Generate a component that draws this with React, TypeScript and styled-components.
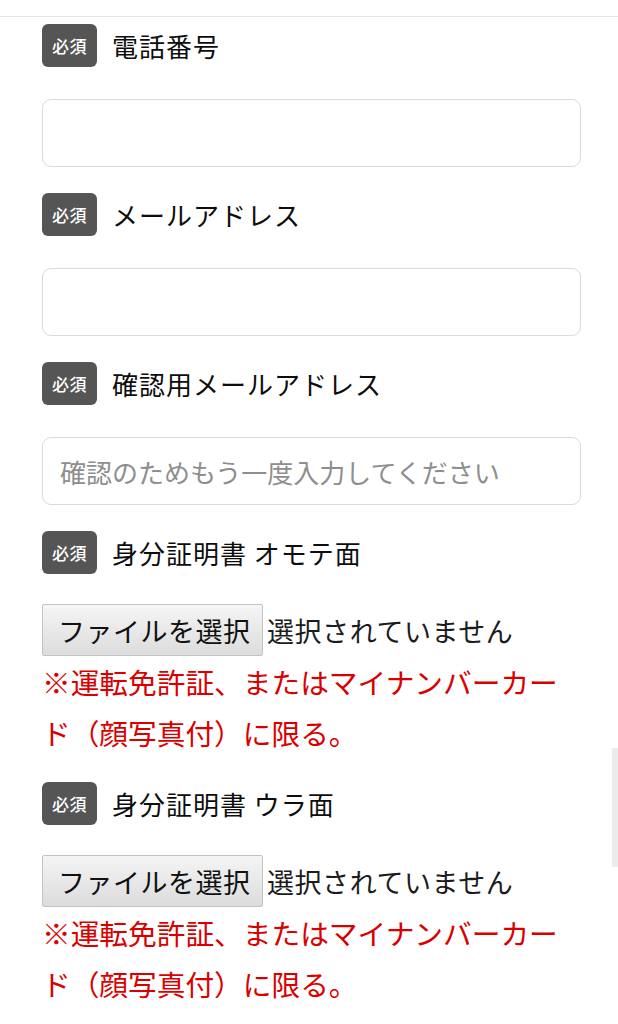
import React from "react";
import styled, { createGlobalStyle } from "styled-components";

const GlobalStyle = createGlobalStyle`
  html, body {
    margin: 0;
    padding: 0;
    background: #ffffff;
  }
  body {
    font-family: "Noto Sans CJK JP", "Noto Sans", sans-serif;
    color: #1a1a1a;
  }
  * { box-sizing: border-box; }
`;

const Page = styled.div`
  width: 618px;
  min-height: 1024px;
  overflow: hidden;
`;

const TopBar = styled.div`
  height: 17px;
  border-bottom: 1px solid #e6e6e6;
`;

const Form = styled.form`
  display: flex;
  flex-direction: column;
  padding: 7px 37px 0 42px;
`;

const Field = styled.div<{ $kind: "text" | "file" }>`
  display: flex;
  flex-direction: column;
  margin-bottom: ${(p) => (p.$kind === "text" ? "26px" : "21px")};
`;

const LabelRow = styled.div<{ $gap: number }>`
  display: flex;
  align-items: center;
  height: 43px;
  margin-bottom: ${(p) => p.$gap}px;
`;

const Badge = styled.span`
  display: inline-flex;
  align-items: center;
  justify-content: center;
  width: 55px;
  height: 43px;
  border-radius: 6px;
  background: #555555;
  color: #ffffff;
  font-size: 17px;
  font-weight: 500;
  letter-spacing: 0.5px;
  line-height: 1;
  flex-shrink: 0;
`;

const LabelText = styled.span`
  margin-left: 15px;
  font-size: 26px;
  letter-spacing: 1px;
  color: #0d0d0d;
  line-height: 1;
  white-space: pre;
`;

const TextInput = styled.input`
  width: 100%;
  height: 68px;
  border: 1.5px solid #dadada;
  border-radius: 9px;
  padding: 0 17px;
  font-family: "Noto Sans CJK JP", "Noto Sans", sans-serif;
  font-size: 26px;
  color: #222;
  background: #fff;
  outline: none;
  &::placeholder {
    color: #8e8e8e;
  }
`;

const FileRow = styled.div`
  display: flex;
  align-items: center;
  height: 52px;
`;

const FileButton = styled.button`
  height: 52px;
  width: 221px;
  padding: 0 0 0 15px;
  text-align: left;
  border: 1px solid #c3c3c3;
  border-radius: 2px;
  background: linear-gradient(#f5f5f5, #dcdcdc);
  font-family: "Noto Sans CJK JP", "Noto Sans", sans-serif;
  font-size: 27px;
  letter-spacing: 0.5px;
  color: #111;
  line-height: 1;
  white-space: nowrap;
`;

const FileStatus = styled.span`
  margin-left: 4px;
  font-size: 27px;
  letter-spacing: 0.55px;
  color: #1c1c1c;
  line-height: 1;
  white-space: nowrap;
`;

const Note = styled.p`
  margin: 0 0 3px;
  font-size: 28.7px;
  line-height: 51px;
  color: #da0000;
  white-space: nowrap;
`;

const NoteLine = styled.span`
  display: block;
`;

const ScrollThumb = styled.div`
  position: fixed;
  right: 0;
  top: 748px;
  width: 6px;
  height: 119px;
  background: #ececec;
`;

type TextFieldDef = { kind: "text"; label: string; placeholder?: string };
type FileFieldDef = { kind: "file"; label: string };

const fields: (TextFieldDef | FileFieldDef)[] = [
  { kind: "text", label: "電話番号" },
  { kind: "text", label: "メールアドレス" },
  {
    kind: "text",
    label: "確認用メールアドレス",
    placeholder: "確認のためもう一度入力してください",
  },
  { kind: "file", label: "身分証明書 オモテ面" },
  { kind: "file", label: "身分証明書 ウラ面" },
];

export default function App() {
  return (
    <Page>
      <GlobalStyle />
      <TopBar />
      <Form onSubmit={(e) => e.preventDefault()}>
        {fields.map((f) => (
          <Field key={f.label} $kind={f.kind}>
            <LabelRow $gap={f.kind === "text" ? 32 : 30}>
              <Badge>必須</Badge>
              <LabelText>{f.label}</LabelText>
            </LabelRow>
            {f.kind === "text" ? (
              <TextInput type="text" placeholder={f.placeholder ?? ""} />
            ) : (
              <>
                <FileRow>
                  <FileButton type="button">ファイルを選択</FileButton>
                  <FileStatus>選択されていません</FileStatus>
                </FileRow>
                <Note>
                  <NoteLine>※運転免許証、またはマイナンバーカー</NoteLine>
                  <NoteLine>ド（顔写真付）に限る。</NoteLine>
                </Note>
              </>
            )}
          </Field>
        ))}
      </Form>
      <ScrollThumb />
    </Page>
  );
}
